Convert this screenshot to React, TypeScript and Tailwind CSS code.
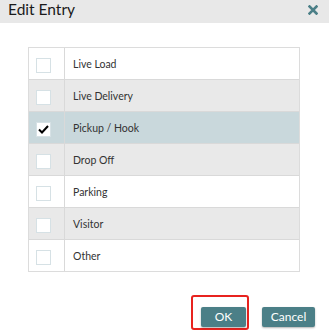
import React from "react";

const rows = [
  { label: "Live Load", bg: "bg-white", checked: false },
  { label: "Live Delivery", bg: "bg-[#e9e9e9]", checked: false },
  { label: "Pickup / Hook", bg: "bg-[#c9d8dc]", checked: true },
  { label: "Drop Off", bg: "bg-[#e9e9e9]", checked: false },
  { label: "Parking", bg: "bg-white", checked: false },
  { label: "Visitor", bg: "bg-[#e9e9e9]", checked: false },
  { label: "Other", bg: "bg-white", checked: false },
];

const App = () => {
  return (
    <div className="w-[329px] h-[332px] bg-white font-['Lato',sans-serif] text-[#333]">
      <div className="h-[23px] bg-[#e8e8e8] flex items-center justify-between pl-2 pr-[11px]">
        <h1 className="text-[15.5px] leading-none text-[#1a1a1a] mt-[-3px]">Edit Entry</h1>
        <svg width="10" height="10" viewBox="0 0 10 10" className="mt-[-4px]">
          <path d="M1.5 1.5 L8.5 8.5 M8.5 1.5 L1.5 8.5" stroke="#4b7f87" strokeWidth="2.6" strokeLinecap="square" />
        </svg>
      </div>

      <div className="ml-[28px] mt-[24px] w-[272px] border border-[#dcdcdc]">
        {rows.map((r, i) => (
          <div
            key={r.label}
            className={`flex ${r.bg} ${i > 0 ? "h-[32px] border-t border-[#d9d9d9]" : "h-[31px]"}`}
          >
            <div className="w-[36px] border-r border-[#d9d9d9] flex items-center pl-[7px] pt-[3px]">
              <div className="w-[15px] h-[15px] bg-white border border-[#d6e1e5] flex items-center justify-center">
                {r.checked && (
                  <svg width="11" height="9" viewBox="0 0 11 9">
                    <path d="M1 4.5 L4 7.5 L10 1" stroke="#000" strokeWidth="2" fill="none" />
                  </svg>
                )}
              </div>
            </div>
            <div className="flex items-center pl-[8px] pt-[3px] text-[10.5px]">{r.label}</div>
          </div>
        ))}
      </div>

      <div className="flex items-end mt-[23px] ml-[191px]">
        <div className="border-2 border-[#e8231f] rounded-[3px] pl-[8px] pr-[1px] pt-[6px] pb-[1px]">
          <button className="w-[45px] h-[20px] bg-[#4b7f87] text-white text-[12px] rounded-[2px] shadow-[0_1px_2px_rgba(0,0,0,0.3)]">
            OK
          </button>
        </div>
        <button className="ml-[13px] mb-[3px] w-[53px] h-[20px] bg-[#4b7f87] text-white text-[12px] rounded-[2px] shadow-[0_1px_2px_rgba(0,0,0,0.3)]">
          Cancel
        </button>
      </div>
    </div>
  );
};

export default App;
